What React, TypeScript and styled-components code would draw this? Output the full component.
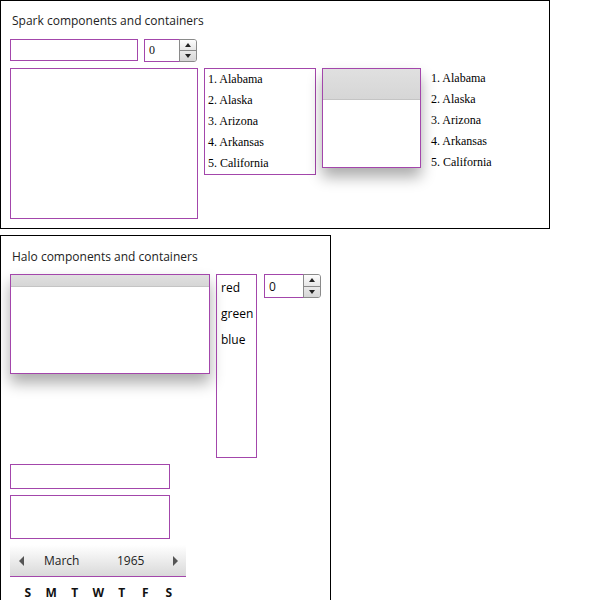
import React from "react";
import styled, { createGlobalStyle } from "styled-components";

const purple = "#a346ab";

const Global = createGlobalStyle`
  html, body { margin: 0; padding: 0; background: #fff; }
  body { font-family: "Open Sans", sans-serif; }
  * { box-sizing: border-box; }
`;

const Page = styled.div`
  display: flex;
  flex-direction: column;
  align-items: flex-start;
  gap: 6px;
`;

const Panel = styled.section<{ $w: number; $h: number; $open?: boolean }>`
  width: ${(p) => p.$w}px;
  height: ${(p) => p.$h}px;
  border: 1px solid #000;
  ${(p) => (p.$open ? "border-bottom: none;" : "")}
  padding: 9px 9px;
  display: flex;
  flex-direction: column;
`;

const Title = styled.div<{ $mt: number }>`
  font-family: "Open Sans", sans-serif;
  font-size: 12px;
  color: #222;
  margin-left: 2px;
  margin-top: ${(p) => p.$mt}px;
  height: 20px;
  line-height: 20px;
`;

const Row = styled.div<{ $gap: number; $mt: number }>`
  display: flex;
  align-items: flex-start;
  gap: ${(p) => p.$gap}px;
  margin-top: ${(p) => p.$mt}px;
`;

const Box = styled.div<{ $w: number; $h: number }>`
  width: ${(p) => p.$w}px;
  height: ${(p) => p.$h}px;
  border: 1px solid ${purple};
  background: #fff;
  flex: none;
`;

const Stepper = styled.div<{ $w: number; $h: number; $ml?: number }>`
  display: flex;
  width: ${(p) => p.$w}px;
  height: ${(p) => p.$h}px;
  margin-left: ${(p) => p.$ml ?? 0}px;
  flex: none;
`;

const StepField = styled.div<{ $serif?: boolean }>`
  flex: 1;
  border: 1px solid ${purple};
  border-right: none;
  background: #fff;
  display: flex;
  align-items: center;
  padding-left: 4px;
  font-family: ${(p) => (p.$serif ? '"Liberation Serif", serif' : '"Open Sans", sans-serif')};
  font-size: 12px;
  color: #111;
`;

const StepButtons = styled.div`
  width: 18px;
  display: flex;
  flex-direction: column;
  border: 1px solid #8a8a8a;
  border-radius: 0 3px 3px 0;
  overflow: hidden;
  margin-left: -1px;
`;

const StepBtn = styled.div<{ $down?: boolean }>`
  flex: 1;
  display: flex;
  align-items: center;
  justify-content: center;
  background: linear-gradient(#fdfdfd, #e6e6e6);
  ${(p) => (p.$down ? "border-top: 1px solid #8a8a8a; background: linear-gradient(#e9e9e9, #d6d6d6);" : "")}
`;

const Tri = styled.div<{ $down?: boolean }>`
  width: 0;
  height: 0;
  border-left: 3.5px solid transparent;
  border-right: 3.5px solid transparent;
  ${(p) => (p.$down ? "border-top: 4px solid #222;" : "border-bottom: 4px solid #222;")}
`;

const List = styled.div<{ $w: number; $h: number; $bordered?: boolean; $sans?: boolean; $step: number; $pl: number }>`
  width: ${(p) => p.$w}px;
  height: ${(p) => p.$h}px;
  ${(p) => (p.$bordered ? `border: 1px solid ${purple};` : "")}
  padding-left: ${(p) => p.$pl}px;
  display: flex;
  flex-direction: column;
  flex: none;
  font-family: ${(p) => (p.$sans ? '"Open Sans", sans-serif' : '"Liberation Serif", serif')};
  font-size: 12px;
  color: #000;
  & > div {
    height: ${(p) => p.$step}px;
    line-height: ${(p) => p.$step}px;
    white-space: nowrap;
  }
`;

const ShadowPanel = styled.div<{ $w: number; $h: number }>`
  width: ${(p) => p.$w}px;
  height: ${(p) => p.$h}px;
  border: 1px solid ${purple};
  background: #fff;
  flex: none;
  display: flex;
  flex-direction: column;
  box-shadow: 0 9px 14px rgba(0, 0, 0, 0.33);
`;

const PanelHead = styled.div<{ $h: number }>`
  height: ${(p) => p.$h}px;
  background: linear-gradient(#e0e0e0, #d6d6d6);
  border-bottom: 1px solid #c4c4c4;
`;

const Stack = styled.div`
  display: flex;
  flex-direction: column;
  gap: 6px;
  margin-top: 6px;
`;

const DateHead = styled.div`
  width: 176px;
  height: 32px;
  background: linear-gradient(#ffffff, #d9d9d9);
  border-bottom: 1px solid ${purple};
  display: flex;
  align-items: center;
  padding: 0 8px 0 9px;
  font-family: "Open Sans", sans-serif;
  font-size: 12px;
  color: #222;
`;

const Arrow = styled.div<{ $right?: boolean }>`
  width: 0;
  height: 0;
  border-top: 5px solid transparent;
  border-bottom: 5px solid transparent;
  ${(p) => (p.$right ? "border-left: 5px solid #555;" : "border-right: 5px solid #555;")}
`;

const Month = styled.span`
  margin-left: 20px;
  width: 73px;
`;

const Year = styled.span`
  flex: 1;
`;

const Days = styled.div`
  display: grid;
  grid-template-columns: repeat(7, 23.5px);
  padding-left: 6px;
  margin-top: 7px;
  font-family: "Open Sans", sans-serif;
  font-weight: 700;
  font-size: 12px;
  color: #111;
  & > span { text-align: center; }
`;

const states = ["1. Alabama", "2. Alaska", "3. Arizona", "4. Arkansas", "5. California"];

function NumStepper({ w, h, serif, ml }: { w: number; h: number; serif?: boolean; ml?: number }) {
  return (
    <Stepper $w={w} $h={h} $ml={ml}>
      <StepField $serif={serif}>0</StepField>
      <StepButtons>
        <StepBtn><Tri /></StepBtn>
        <StepBtn $down><Tri $down /></StepBtn>
      </StepButtons>
    </Stepper>
  );
}

export default function App() {
  return (
    <>
      <Global />
      <Page>
        <Panel $w={550} $h={229}>
          <Title $mt={1}>Spark components and containers</Title>
          <Row $gap={6} $mt={8}>
            <Box $w={128} $h={22} />
            <NumStepper w={53} h={23} serif />
          </Row>
          <Row $gap={6} $mt={6}>
            <Box $w={188} $h={151} />
            <List $w={112} $h={107} $bordered $step={21} $pl={3}>
              {states.map((s) => <div key={s}>{s}</div>)}
            </List>
            <ShadowPanel $w={99} $h={100}>
              <PanelHead $h={31} />
            </ShadowPanel>
            <List $w={80} $h={107} $step={21} $pl={4}>
              {states.map((s) => <div key={s}>{s}</div>)}
            </List>
          </Row>
        </Panel>
        <Panel $w={331} $h={365} $open>
          <Title $mt={2}>Halo components and containers</Title>
          <Row $gap={6} $mt={7}>
            <ShadowPanel $w={200} $h={100}>
              <PanelHead $h={12} />
            </ShadowPanel>
            <List $w={41} $h={184} $bordered $sans $step={26} $pl={4}>
              <div>red</div>
              <div>green</div>
              <div>blue</div>
            </List>
            <NumStepper w={57} h={24} ml={1} />
          </Row>
          <Stack>
            <Box $w={160} $h={25} />
            <Box $w={160} $h={44} />
            <div>
              <DateHead>
                <Arrow />
                <Month>March</Month>
                <Year>1965</Year>
                <Arrow $right />
              </DateHead>
              <Days>
                {["S", "M", "T", "W", "T", "F", "S"].map((d, i) => <span key={i}>{d}</span>)}
              </Days>
            </div>
          </Stack>
        </Panel>
      </Page>
    </>
  );
}
